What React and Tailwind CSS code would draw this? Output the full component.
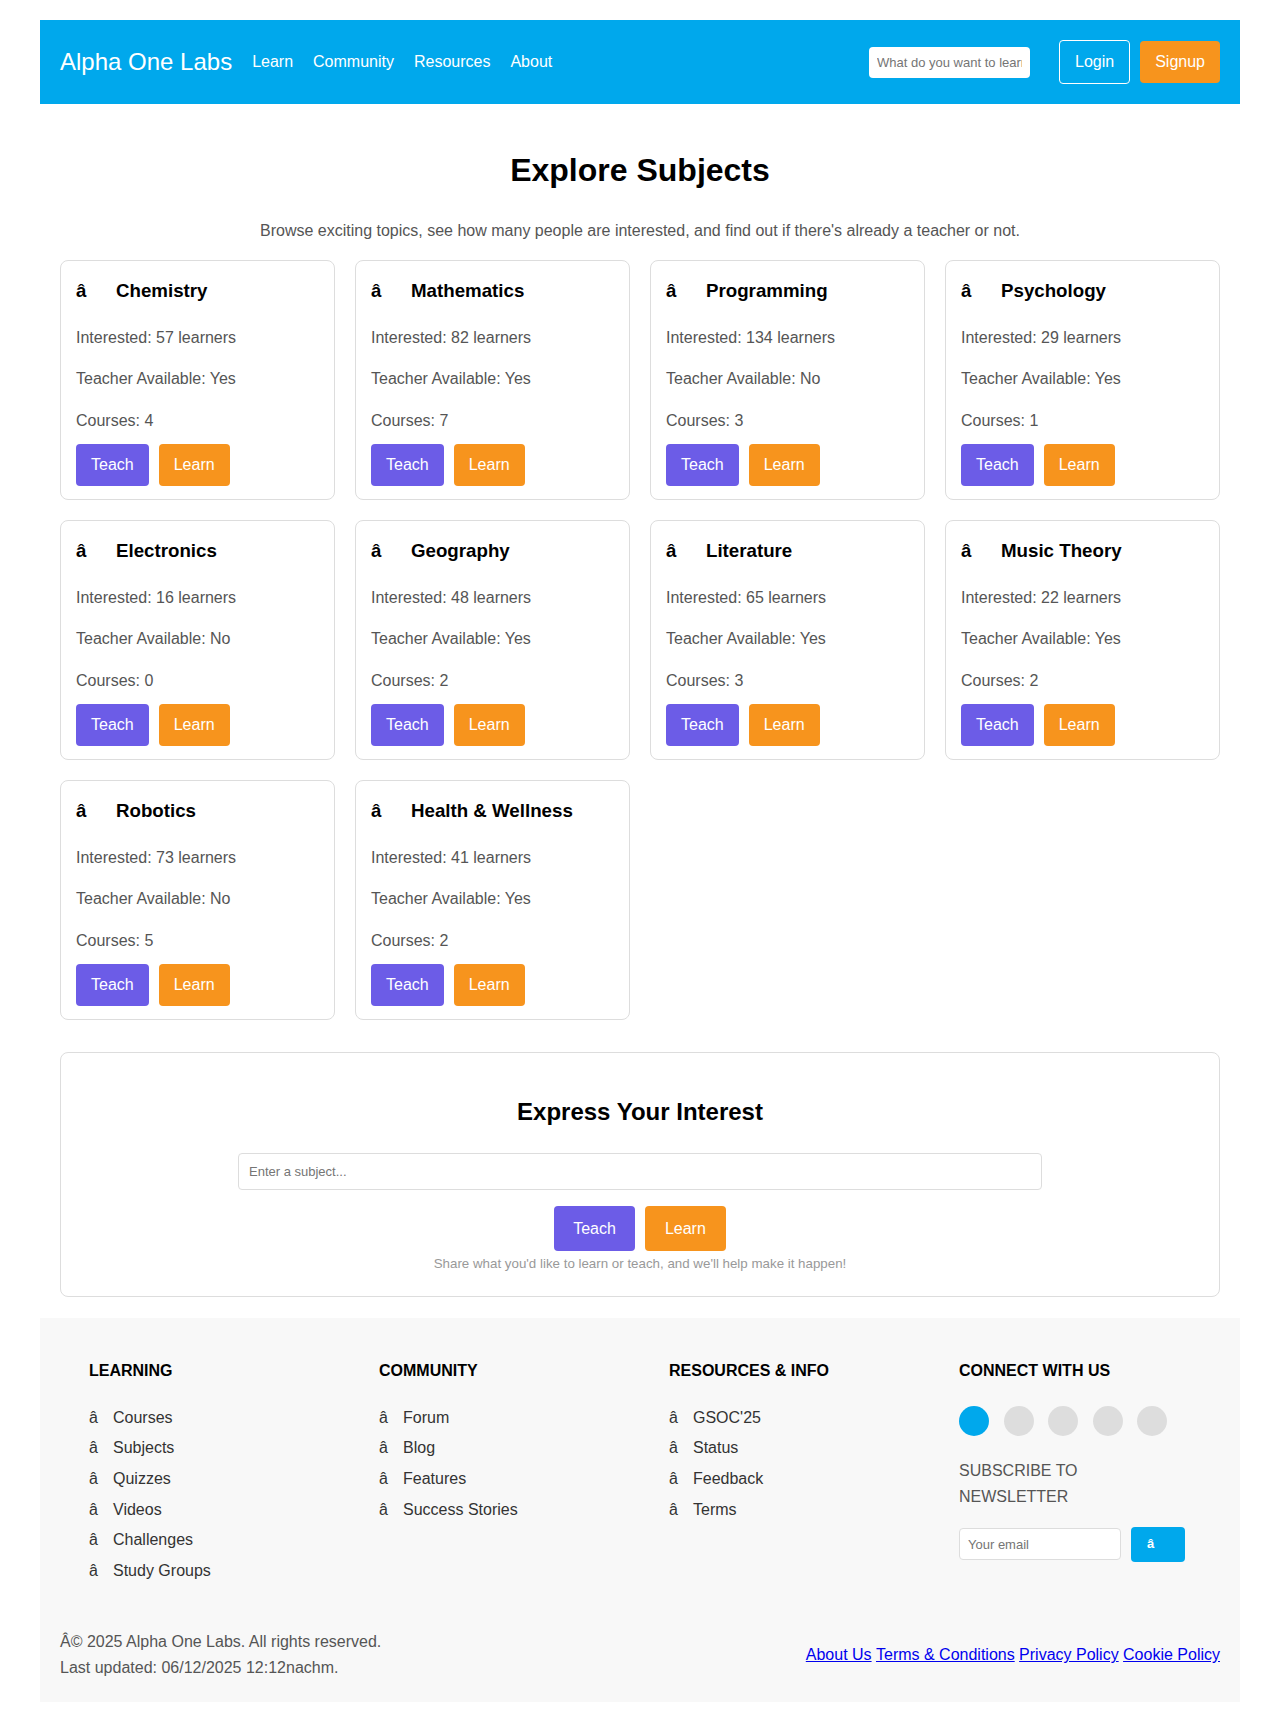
import React from 'react';

const subjects = [
  { name: 'Chemistry', interested: 57, teacher: 'Yes', courses: 4 },
  { name: 'Mathematics', interested: 82, teacher: 'Yes', courses: 7 },
  { name: 'Programming', interested: 134, teacher: 'No', courses: 3 },
  { name: 'Psychology', interested: 29, teacher: 'Yes', courses: 1 },
  { name: 'Electronics', interested: 16, teacher: 'No', courses: 0 },
  { name: 'Geography', interested: 48, teacher: 'Yes', courses: 2 },
  { name: 'Literature', interested: 65, teacher: 'Yes', courses: 3 },
  { name: 'Music Theory', interested: 22, teacher: 'Yes', courses: 2 },
  { name: 'Robotics', interested: 73, teacher: 'No', courses: 5 },
  { name: 'Health & Wellness', interested: 41, teacher: 'Yes', courses: 2 },
];

const footerCols = [
  { title: 'Learning', links: ['Courses', 'Subjects', 'Quizzes', 'Videos', 'Challenges', 'Study Groups'] },
  { title: 'Community', links: ['Forum', 'Blog', 'Features', 'Success Stories'] },
  { title: 'Resources & Info', links: ["GSOC'25", 'Status', 'Feedback', 'Terms'] },
];

const SubjectCard = ({ subject }) => (
  <div className="h-[240px] rounded-lg border border-[#ddd] bg-white p-[15px]">
    <h3 className="flex text-[18.72px] font-bold leading-[30px] text-black">
      <span className="inline-block w-[40px]">â</span>
      <span>{subject.name}</span>
    </h3>
    <p className="mt-[19px] text-[#555]">Interested: {subject.interested} learners</p>
    <p className="mt-4 text-[#555]">Teacher Available: {subject.teacher}</p>
    <p className="mt-4 text-[#555]">Courses: {subject.courses}</p>
    <div className="mt-[11px] flex gap-[10px]">
      <button className="rounded bg-[#6c5ce7] px-[15px] py-2 text-white">Teach</button>
      <button className="rounded bg-[#f7941d] px-[15px] py-2 text-white">Learn</button>
    </div>
  </div>
);

export default function App() {
  return (
    <div className="min-h-[1720px] bg-white font-['Liberation_Sans',Arial,sans-serif] leading-[1.6]">
      <div className="mx-auto max-w-[1200px] pt-5 pb-5">
        {/* header */}
        <header className="flex h-[84px] items-center justify-between bg-[#00a8ec] px-5 text-white">
          <div className="flex items-center gap-5">
            <span className="text-[24px]">Alpha One Labs</span>
            <nav className="flex gap-5">
              <a>Learn</a>
              <a>Community</a>
              <a>Resources</a>
              <a>About</a>
            </nav>
          </div>
          <div className="flex items-center">
            <input
              className="mr-[29px] h-[31px] w-[161px] rounded bg-white px-2 text-[13px] text-[#333] placeholder:text-[#757575] outline-none"
              placeholder="What do you want to learn?"
            />
            <button className="rounded border border-white px-[15px] py-2">Login</button>
            <button className="ml-[10px] rounded bg-[#f7941d] px-[15px] py-2">Signup</button>
          </div>
        </header>

        <main className="px-5 pt-5">
          <h1 className="mt-[21px] text-center text-[32px] font-bold leading-[51px] text-black">Explore Subjects</h1>
          <p className="mt-[22px] text-center text-[#555]">
            Browse exciting topics, see how many people are interested, and find out if there's already a teacher or not.
          </p>

          <div className="mt-4 grid grid-cols-4 gap-5">
            {subjects.map((s) => (
              <SubjectCard key={s.name} subject={s} />
            ))}
          </div>

          <section className="mt-8 rounded-lg border border-[#ddd] pt-[40px] pb-[24px] text-center">
            <h2 className="text-[24px] font-bold leading-[38px] text-black">Express Your Interest</h2>
            <input
              className="mx-auto mt-[22px] block h-[37px] w-[804px] rounded border border-[#ddd] px-[10px] text-[13px] outline-none placeholder:text-[#757575]"
              placeholder="Enter a subject..."
            />
            <div className="mt-4 flex justify-center gap-[10px]">
              <button className="rounded bg-[#6c5ce7] px-[19px] py-[10px] text-white">Teach</button>
              <button className="rounded bg-[#f7941d] px-5 py-[10px] text-white">Learn</button>
            </div>
            <p className="mt-[4px] text-[13.33px] leading-[17px] text-[#999]">
              Share what you'd like to learn or teach, and we'll help make it happen!
            </p>
          </section>
        </main>

        {/* footer */}
        <footer className="mt-[21px] bg-[#f8f8f8] pt-10 pb-[21px]">
          <div className="grid grid-cols-[repeat(4,250px)] gap-x-[40px] pl-[49px]">
            {footerCols.map((col) => (
              <div key={col.title}>
                <h4 className="mb-[21px] font-bold uppercase text-black">{col.title}</h4>
                <ul>
                  {col.links.map((l) => (
                    <li key={l} className="mb-[5px] text-[#333]">
                      <span className="inline-block w-[24px]">â</span>
                      {l}
                    </li>
                  ))}
                </ul>
              </div>
            ))}
            <div>
              <h4 className="mb-[22px] font-bold uppercase text-black">Connect With Us</h4>
              <div className="flex gap-[14.5px]">
                <span className="h-[30px] w-[30px] rounded-full bg-[#00a8ec]" />
                <span className="h-[30px] w-[30px] rounded-full bg-[#ddd]" />
                <span className="h-[30px] w-[30px] rounded-full bg-[#ddd]" />
                <span className="h-[30px] w-[30px] rounded-full bg-[#ddd]" />
                <span className="h-[30px] w-[30px] rounded-full bg-[#ddd]" />
              </div>
              <h4 className="mt-[22px] w-[180px] leading-[26px] uppercase text-[#555]">Subscribe to Newsletter</h4>
              <div className="mt-[17px] flex items-center gap-[10px]">
                <input
                  className="h-[32px] w-[162px] rounded border border-[#ddd] bg-white px-2 text-[13px] outline-none placeholder:text-[#757575]"
                  placeholder="Your email"
                />
                <button className="h-[35px] w-[54px] rounded bg-[#00a8ec] pl-4 text-left text-[13px] font-bold text-white">â</button>
              </div>
            </div>
          </div>

          <div className="mt-[41px] flex items-center justify-between px-5">
            <div className="text-[#555]">
              <p>Â© 2025 Alpha One Labs. All rights reserved.</p>
              <p>Last updated: 06/12/2025 12:12nachm.</p>
            </div>
            <div className="flex gap-[4.4px] text-[#0000ee]">
              <a className="underline">About Us</a>
              <a className="underline">Terms &amp; Conditions</a>
              <a className="underline">Privacy Policy</a>
              <a className="underline">Cookie Policy</a>
            </div>
          </div>
        </footer>
      </div>
    </div>
  );
}
